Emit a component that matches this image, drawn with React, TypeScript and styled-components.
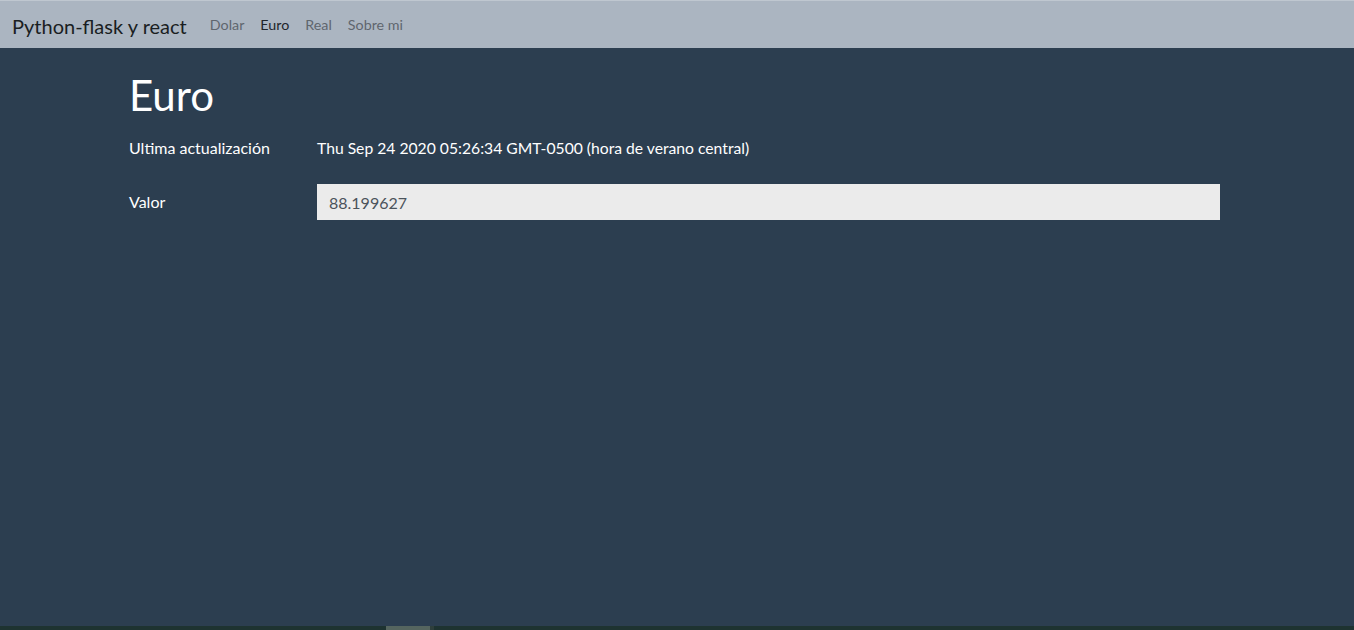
import React from "react";
import styled, { createGlobalStyle } from "styled-components";

const Global = createGlobalStyle`
  html, body { margin: 0; padding: 0; }
  body {
    font-family: Lato, "Open Sans", "Liberation Sans", sans-serif;
    background: #2c3e50;
    color: #ffffff;
    overflow: hidden;
  }
`;

const Page = styled.div`
  height: 630px;
  display: flex;
  flex-direction: column;
`;

const Navbar = styled.nav`
  box-sizing: border-box;
  height: 48px;
  border-top: 1px solid #bfc7d0;
  background: #abb5c1;
  display: flex;
  align-items: center;
  padding: 2px 12px 0;
`;

const Brand = styled.span`
  font-size: 20px;
  color: #1a1e22;
  margin-right: 15px;
  line-height: 1;
`;

const NavList = styled.div`
  display: flex;
  align-items: center;
`;

const NavLink = styled.a<{ $active?: boolean }>`
  font-size: 14.3px;
  padding: 0 8px;
  color: ${(p) => (p.$active ? "#1f252b" : "#5f666e")};
  text-decoration: none;
  line-height: 1;
`;

const Main = styled.main`
  flex: 1;
  padding: 22px 0 0 129px;
`;

const Title = styled.h1`
  margin: 0 0 10px;
  font-size: 42px;
  font-weight: 400;
  line-height: 1.2;
  color: #ffffff;
`;

const Row = styled.div<{ $gap?: number }>`
  display: flex;
  align-items: center;
  height: 36px;
  margin-bottom: ${(p) => p.$gap ?? 18}px;
`;

const Label = styled.div`
  width: 188px;
  flex: none;
  font-size: 16px;
  line-height: 1.5;
`;

const Value = styled.div`
  font-size: 15.7px;
  line-height: 1.5;
`;

const Input = styled.input`
  box-sizing: border-box;
  width: 903px;
  height: 36px;
  border: none;
  background: #ebebeb;
  color: #4b535b;
  font-family: inherit;
  font-size: 16px;
  padding: 0 12px;
  outline: none;
`;

const BottomBar = styled.div`
  height: 4px;
  background: #1e3331;
  display: flex;
`;

const Thumb = styled.div`
  margin-left: 386px;
  width: 44px;
  background: #55655f;
  border-right: 4px solid #2f3f3c;
`;

export default function App() {
  return (
    <>
      <Global />
      <Page>
        <Navbar>
          <Brand>Python-flask y react</Brand>
          <NavList>
            <NavLink>Dolar</NavLink>
            <NavLink $active>Euro</NavLink>
            <NavLink>Real</NavLink>
            <NavLink>Sobre mi</NavLink>
          </NavList>
        </Navbar>
        <Main>
          <Title>Euro</Title>
          <Row>
            <Label>Ultima actualización</Label>
            <Value>Thu Sep 24 2020 05:26:34 GMT-0500 (hora de verano central)</Value>
          </Row>
          <Row>
            <Label>Valor</Label>
            <Input readOnly value="88.199627" />
          </Row>
        </Main>
        <BottomBar>
          <Thumb />
        </BottomBar>
      </Page>
    </>
  );
}
